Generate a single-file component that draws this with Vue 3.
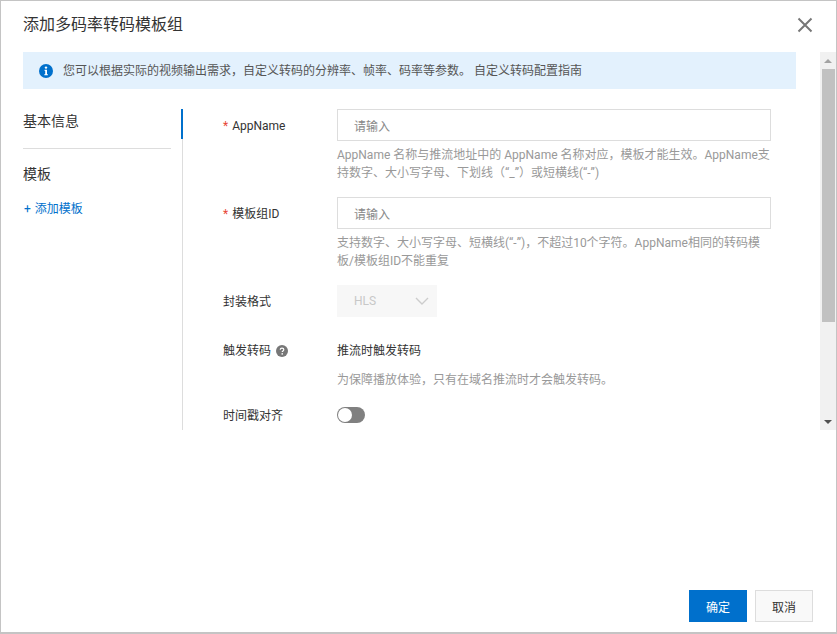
<template>
  <div class="dialog">
    <header class="dialog-header">
      <h1 class="dialog-title">添加多码率转码模板组</h1>
      <button class="dialog-close" aria-label="关闭">
        <svg width="16" height="16" viewBox="0 0 16 16">
          <path d="M1.5 1.5 14.5 14.5M14.5 1.5 1.5 14.5" stroke="#777" stroke-width="2" fill="none" />
        </svg>
      </button>
    </header>

    <div class="dialog-scroll">
      <div class="scroll-content">
        <div class="notice">
          <svg class="notice-icon" width="14" height="14" viewBox="0 0 14 14">
            <circle cx="7" cy="7" r="7" fill="#0070cc" />
            <circle cx="7" cy="3.6" r="1.2" fill="#fff" />
            <path d="M5.6 5.8H8v4.4h.9v1.1H5.3v-1.1h.9V6.9h-.6z" fill="#fff" />
          </svg>
          <span>您可以根据实际的视频输出需求，自定义转码的分辨率、帧率、码率等参数。 自定义转码配置指南</span>
        </div>

        <div class="panel">
          <aside class="side-nav">
            <div class="nav-item nav-item-active">基本信息</div>
            <div class="nav-divider"></div>
            <div class="nav-item nav-group">模板</div>
            <a class="nav-add">+ 添加模板</a>
          </aside>

          <form class="form" @submit.prevent>
            <div v-for="field in textFields" :key="field.label" class="form-row">
              <label class="form-label"><span class="required">*</span> {{ field.label }}</label>
              <div class="form-control">
                <input class="text-input" type="text" placeholder="请输入" />
                <p class="form-help">{{ field.help }}</p>
              </div>
            </div>

            <div class="form-row form-row-format">
              <label class="form-label">封装格式</label>
              <div class="form-control">
                <div class="select-disabled">
                  <span>HLS</span>
                  <svg width="14" height="8" viewBox="0 0 14 8">
                    <path d="M1 1 7 7 13 1" stroke="#ccc" stroke-width="1.4" fill="none" />
                  </svg>
                </div>
              </div>
            </div>

            <div class="form-row form-row-trigger">
              <label class="form-label">
                触发转码
                <svg class="help-icon" width="12" height="12" viewBox="0 0 12 12">
                  <circle cx="6" cy="6" r="6" fill="#777" />
                  <path d="M4.3 4.7C4.3 3.7 5 3.1 6 3.1s1.8.6 1.8 1.5c0 1.3-1.6 1.3-1.6 2.5" stroke="#fff" stroke-width="1.2" fill="none" />
                  <circle cx="6.2" cy="8.9" r=".8" fill="#fff" />
                </svg>
              </label>
              <div class="form-control">
                <div class="static-value">推流时触发转码</div>
                <p class="form-help form-help-trigger">为保障播放体验，只有在域名推流时才会触发转码。</p>
              </div>
            </div>

            <div class="form-row form-row-switch">
              <label class="form-label">时间戳对齐</label>
              <div class="form-control">
                <span class="switch"><span class="switch-knob"></span></span>
              </div>
            </div>
          </form>
        </div>
      </div>

      <div class="scrollbar">
        <span class="scroll-btn"><i class="arrow-up"></i></span>
        <span class="scroll-thumb"></span>
        <span class="scroll-rest"></span>
        <span class="scroll-btn"><i class="arrow-down"></i></span>
      </div>
    </div>

    <footer class="dialog-footer">
      <button class="btn btn-primary">确定</button>
      <button class="btn btn-default">取消</button>
    </footer>
  </div>
</template>

<script setup>
const textFields = [
  {
    label: 'AppName',
    help: 'AppName 名称与推流地址中的 AppName 名称对应，模板才能生效。AppName支持数字、大小写字母、下划线（“_”）或短横线(“-”)',
  },
  {
    label: '模板组ID',
    help: '支持数字、大小写字母、短横线(“-”)，不超过10个字符。AppName相同的转码模板/模板组ID不能重复',
  },
]
</script>

<style>
html,
body {
  margin: 0;
  background: #fff;
}
</style>

<style scoped>
.dialog {
  box-sizing: border-box;
  width: 837px;
  height: 634px;
  display: flex;
  flex-direction: column;
  border: 1px solid #c4c4c4;
  border-bottom-width: 2px;
  background: #fff;
  color: #333;
  font-family: Roboto, "Noto Sans CJK SC", sans-serif;
  font-size: 12px;
  overflow: hidden;
}

.dialog-header {
  height: 51px;
  flex: none;
  display: flex;
  justify-content: space-between;
  align-items: center;
  padding: 0 23px 3px 22px;
  box-sizing: border-box;
}

.dialog-title {
  margin: 0;
  font-size: 16px;
  font-weight: 400;
  line-height: 24px;
}

.dialog-close {
  display: flex;
  padding: 0;
  border: 0;
  background: none;
}

.dialog-scroll {
  height: 378px;
  flex: none;
  display: flex;
  justify-content: space-between;
  overflow: hidden;
}

.scroll-content {
  width: 773px;
  margin-left: 22px;
}

.notice {
  height: 37px;
  display: flex;
  align-items: center;
  gap: 10px;
  padding-left: 16px;
  background: #e3f1fd;
  color: #555;
  line-height: 18px;
}

.panel {
  display: flex;
  height: 321px;
  margin-top: 20px;
  overflow: hidden;
}

.side-nav {
  position: relative;
  box-sizing: border-box;
  width: 160px;
  flex: none;
  border-right: 1px solid #ddd;
}

.side-nav::before {
  content: '';
  position: absolute;
  top: 0;
  right: -1px;
  width: 2px;
  height: 30px;
  background: #0070cc;
}

.nav-item {
  font-size: 14px;
  line-height: 24px;
  color: #333;
}

.nav-divider {
  width: 148px;
  height: 1px;
  margin-top: 15px;
  background: #ddd;
}

.nav-group {
  margin-top: 13px;
}

.nav-add {
  display: block;
  margin-top: 14px;
  padding-left: 1px;
  line-height: 18px;
  word-spacing: 1px;
  color: #0070cc;
}

.form {
  flex: 1;
  min-width: 0;
  padding-left: 40px;
}

.form-row {
  display: flex;
  margin-bottom: 15px;
}

.form-label {
  width: 114px;
  flex: none;
  display: flex;
  align-items: flex-start;
  gap: 4px;
  padding-top: 8px;
  line-height: 18px;
  color: #333;
}

.required {
  color: #e84738;
}

.form-control {
  width: 434px;
  flex: none;
}

.text-input {
  display: block;
  box-sizing: border-box;
  width: 100%;
  height: 32px;
  padding: 3px 16px 0;
  border: 1px solid #ddd;
  outline: none;
  font: inherit;
  color: #333;
}

.text-input::placeholder {
  color: #888;
  opacity: 1;
}

.form-help {
  margin: 5px 0 0;
  line-height: 18px;
  color: #999;
}

.select-disabled {
  box-sizing: border-box;
  width: 100px;
  height: 32px;
  display: flex;
  justify-content: space-between;
  align-items: center;
  padding: 0 8px 0 17px;
  background: #f7f7f7;
  color: #c8c8c8;
}

.form-row-format {
  margin-bottom: 16px;
}

.form-row-trigger {
  margin-top: 25px;
  margin-bottom: 16px;
}

.form-row-trigger .form-label {
  padding-top: 0;
  align-items: center;
  height: 18px;
  gap: 5px;
}

.help-icon {
  flex: none;
}

.static-value {
  line-height: 18px;
}

.form-help-trigger {
  margin-top: 11px;
}

.form-row-switch .form-label {
  padding-top: 2px;
}

.form-row-switch {
  align-items: center;
}

.switch {
  position: relative;
  display: block;
  width: 28px;
  height: 16px;
  border-radius: 8px;
  background: #808080;
}

.switch-knob {
  position: absolute;
  top: 1px;
  left: 1px;
  width: 14px;
  height: 14px;
  border-radius: 50%;
  background: #fff;
}

.scrollbar {
  width: 16px;
  flex: none;
  display: flex;
  flex-direction: column;
  background: #f1f1f1;
}

.scroll-btn {
  height: 17px;
  flex: none;
  display: flex;
  align-items: center;
  justify-content: center;
}

.scroll-thumb {
  height: 253px;
  flex: none;
  margin: 0 1px 0 2px;
  background: #c1c1c1;
}

.scroll-rest {
  flex: 1;
}

.arrow-up,
.arrow-down {
  width: 0;
  height: 0;
  border-left: 4px solid transparent;
  border-right: 4px solid transparent;
}

.arrow-up {
  border-bottom: 4px solid #a3a3a3;
}

.arrow-down {
  border-top: 4px solid #505050;
}

.dialog-footer {
  flex: 1;
  display: flex;
  justify-content: flex-end;
  align-items: flex-end;
  gap: 8px;
  padding: 0 23px 10px 0;
}

.btn {
  box-sizing: border-box;
  width: 58px;
  height: 32px;
  padding: 0;
  font: inherit;
  border: 1px solid transparent;
}

.btn-primary {
  background: #0070cc;
  color: #fff;
}

.btn-default {
  background: #f9f9f9;
  border-color: #ddd;
  color: #333;
}
</style>
